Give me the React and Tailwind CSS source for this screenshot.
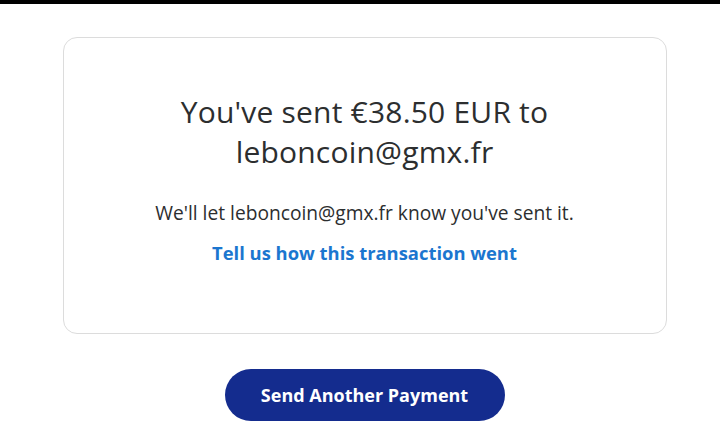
import React from 'react';

export default function App() {
  return (
    <div className="w-[720px] h-[434px] bg-white overflow-hidden" style={{ fontFamily: '"Open Sans", Lato, sans-serif' }}>
      <div className="h-[4px] bg-black" />
      <div className="pt-[33px] pl-[9px] flex flex-col items-center">
        <div className="w-[604px] h-[297px] border border-[#dcdcdc] rounded-[14px] flex flex-col items-center pt-[54px]">
          <h1 className="text-[30px] leading-[40px] tracking-[0.2px] text-[#2c2e2f] text-center font-normal">
            You've sent €38.50 EUR to
            <br />
            leboncoin@gmx.fr
          </h1>
          <p className="mt-[28px] text-[19.2px] leading-[26px] text-[#2c2e2f]">
            We'll let leboncoin@gmx.fr know you've sent it.
          </p>
          <a className="mt-[14px] text-[18.4px] leading-[26px] font-bold text-[#1b76cf]">
            Tell us how this transaction went
          </a>
        </div>
        <button className="mt-[35px] w-[280px] h-[52px] rounded-full bg-[#142c8e] text-white text-[18px] font-bold">
          Send Another Payment
        </button>
      </div>
    </div>
  );
}
